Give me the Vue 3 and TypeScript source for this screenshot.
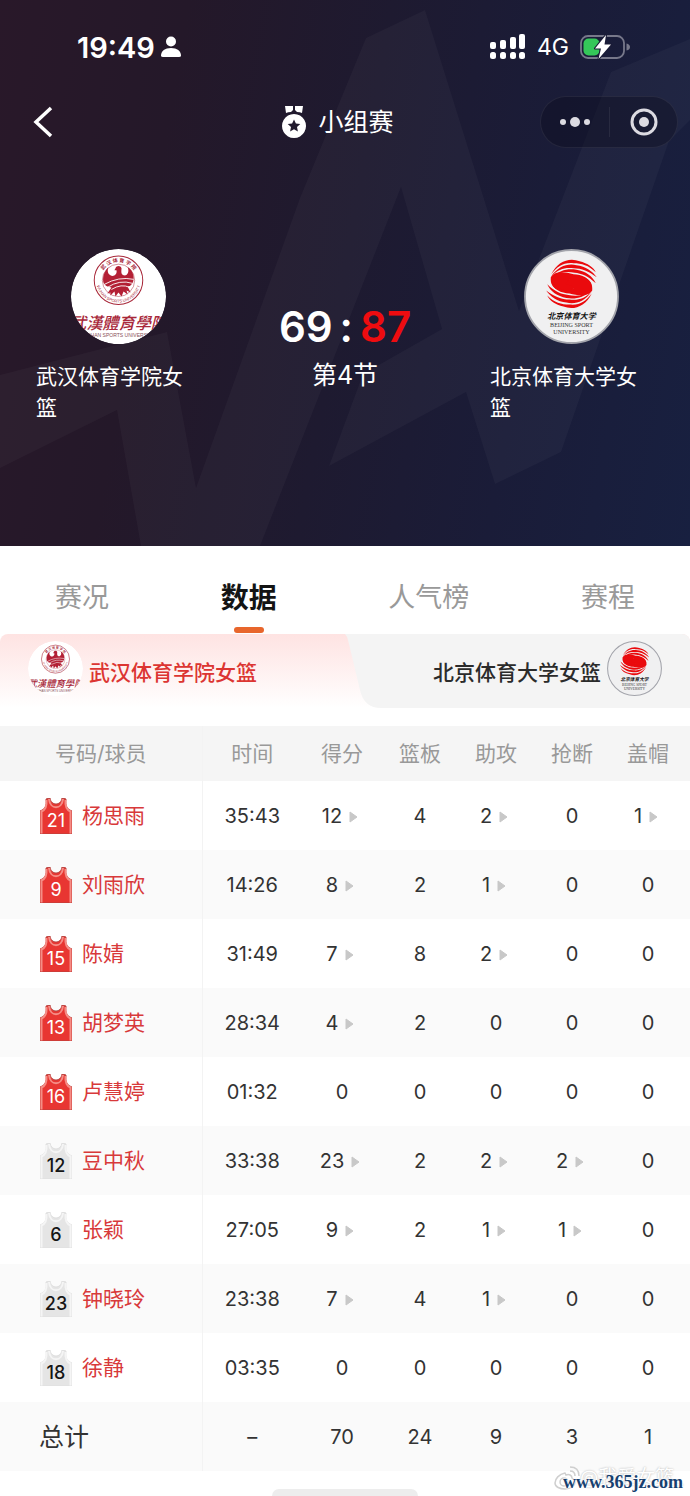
<script setup lang="ts">
import { ref } from 'vue'

interface Stat {
  value: string
  more?: boolean
}

interface Player {
  no: number
  name: string
  starter: boolean
  time: string
  stats: Stat[]
}

// A trailing ">" marks a figure that opens a detail list.
const parse = (line: string): Stat[] =>
  line.split(' ').map((s) => ({ value: s.replace('>', ''), more: s.endsWith('>') }))

const columns = ['时间', '得分', '篮板', '助攻', '抢断', '盖帽']
const tabs = ['赛况', '数据', '人气榜', '赛程']
const activeTab = ref(1)

const players: Player[] = [
  { no: 21, name: '杨思雨', starter: true, time: '35:43', stats: parse('12> 4 2> 0 1>') },
  { no: 9, name: '刘雨欣', starter: true, time: '14:26', stats: parse('8> 2 1> 0 0') },
  { no: 15, name: '陈婧', starter: true, time: '31:49', stats: parse('7> 8 2> 0 0') },
  { no: 13, name: '胡梦英', starter: true, time: '28:34', stats: parse('4> 2 0 0 0') },
  { no: 16, name: '卢慧婷', starter: true, time: '01:32', stats: parse('0 0 0 0 0') },
  { no: 12, name: '豆中秋', starter: false, time: '33:38', stats: parse('23> 2 2> 2> 0') },
  { no: 6, name: '张颖', starter: false, time: '27:05', stats: parse('9> 2 1> 1> 0') },
  { no: 23, name: '钟晓玲', starter: false, time: '23:38', stats: parse('7> 4 1> 0 0') },
  { no: 18, name: '徐静', starter: false, time: '03:35', stats: parse('0 0 0 0 0') },
]
const totals = ['–', '70', '24', '9', '3', '1']
</script>

<template>
  <div class="page">
    <svg class="defs" aria-hidden="true">
      <symbol id="wuhan" viewBox="0 0 94 94">
        <clipPath id="wuhan-clip"><circle cx="47" cy="47" r="47" /></clipPath>
        <g clip-path="url(#wuhan-clip)">
          <circle cx="47" cy="47" r="47" fill="#fff" />
          <circle cx="47" cy="31" r="24" fill="none" stroke="#a8283a" stroke-width="1" />
          <circle cx="47" cy="31" r="16" fill="none" stroke="#a8283a" stroke-width="0.5" />
          <path id="ring-top" d="M29 31a18 18 0 0 1 36 0" fill="none" />
          <path id="ring-bottom" d="M25 31a22 22 0 0 0 44 0" fill="none" />
          <text class="seal-cn" fill="#a8283a" text-anchor="middle"><textPath href="#ring-top" startOffset="50%">武 汉 体 育 学 院</textPath></text>
          <text class="seal-en" fill="#a8283a" text-anchor="middle"><textPath href="#ring-bottom" startOffset="50%">WUHAN SPORTS UNIVERSITY</textPath></text>
          <path
            d="M37 18C33 22 31 27 32 33C34 37 37 38 40 38L36 44L39 43L39 46L43 42L44 47L47 43L50 47L52 42L56 45L55 41L59 43L56 37C60 37 62 33 62 29C62 24 60 20 56 18C58 22 56 27 52 26C49 25 50 21 50 19C49 16 45 16 44 19L43 21L45 21C46 25 42 28 39 26C36 24 36 21 37 18Z"
            fill="#b32035" />
          <path d="M33 35Q47 27 62 30M36 38Q48 30 61 34M40 40Q50 34 58 38" fill="none" stroke="#fff" stroke-width="0.900" />
          <text class="brush" x="47" y="79" fill="#a8283a" text-anchor="middle">武漢體育學院</text>
          <text class="sub-en" x="47" y="87" fill="#8a5058" text-anchor="middle">WUHAN SPORTS UNIVERSITY</text>
        </g>
      </symbol>
      <symbol id="beijing" viewBox="0 0 94 94">
        <circle cx="47" cy="47" r="46" fill="#f0f0f1" stroke="#a3a4ab" stroke-width="1.800" />
        <g id="swirl-half" fill="#ea0a0d">
          <path d="M27 25C33 12 45 8 55 12C63 14 69 18 71 23C64 16 57 14 49 14C39 13 33 17 27 25Z" />
          <path d="M27 27C34 17 43 14 52 16C61 17 68 22 72 28C64 22 57 19 49 19C40 18 34 20 27 27Z" />
          <path d="M28 28C35 21 43 19 52 20.500C61 22 68 27 71 34C64 27 57 24 50 23.500C42 22 34 23 28 28Z" />
          <path d="M26.500 28C26 34 28 38 33 40C38 43 43 42 47 42L53 34.500C49 33 44 32 45 30C49 26 61 28 67 37C66 29 57 25 49 25C41 23 31 21 26.500 28Z" />
        </g>
        <use href="#swirl-half" transform="rotate(180 47 34.500)" />
        <text class="brush-small" x="47" y="69" fill="#161616" text-anchor="middle">北京体育大学</text>
        <text class="serif-en" x="47" y="77" fill="#333" text-anchor="middle">BEIJING SPORT</text>
        <text class="serif-en" x="47" y="84" fill="#333" text-anchor="middle">UNIVERSITY</text>
      </symbol>
      <symbol id="jersey" viewBox="0 0 32 36">
        <path class="jersey-body" d="M6 1L10 0C11 8 21 8 22 0L26 1C25 8 27 11 32 13V36H0V13C5 11 7 8 6 1Z" />
        <path class="jersey-trim" d="M6.500 2C7 8 5 12 1.500 13.500V35.500M25.500 2C25 8 27 12 30.500 13.500V35.500M9 1C10 12 22 12 23 1" />
      </symbol>
    </svg>

    <header class="hero">
      <svg class="hero-art" viewBox="0 0 690 546" preserveAspectRatio="none" aria-hidden="true">
        <path
          d="M0 375L167 332L196 488L300 198L366 38L425 10L519 311L611 72L690 39V120L669 141L561 452L495 484L466 392L329 466L363 374L442 329L401 187L260 546H141L117 410L0 468Z" />
      </svg>

      <div class="status">
        <div class="clock">
          19:49
          <svg width="20" height="22" viewBox="0 0 20 22" fill="#fff" aria-hidden="true">
            <circle cx="10" cy="5.500" r="5" />
            <path d="M0 19.500C0 15 4 12 10 12S20 15 20 19.500Q20 21 18 21H2Q0 21 0 19.500Z" />
          </svg>
        </div>
        <div class="signals">
          <svg width="36" height="26" viewBox="0 0 36 26" fill="#fff" aria-hidden="true">
            <rect x="0" y="8" width="6" height="7" rx="2" /><rect x="10" y="6" width="6" height="9" rx="2" />
            <rect x="20" y="3" width="6" height="12" rx="2" /><rect x="29" y="0" width="6" height="15" rx="2" />
            <rect x="0" y="18" width="6" height="7" rx="2.500" /><rect x="10" y="18" width="6" height="7" rx="2.500" />
            <rect x="20" y="18" width="6" height="7" rx="2.500" /><rect x="29" y="18" width="6" height="7" rx="2.500" />
          </svg>
          <span>4G</span>
          <svg width="50" height="26" viewBox="0 0 50 26" aria-hidden="true">
            <rect x="1" y="2" width="43" height="22" rx="7" fill="none" stroke="#77788a" stroke-width="1.800" />
            <path d="M46.500 9.500Q50 10.500 50 13T46.500 16.500Z" fill="#77788a" />
            <rect x="3.500" y="4.500" width="16" height="17" rx="5" fill="#35c759" />
            <path d="M26 1L15 14.500H21L18.500 25L31 10.500H24.500Z" fill="#fff" stroke="#1b1c37" stroke-width="2" stroke-linejoin="round" paint-order="stroke" />
          </svg>
        </div>
      </div>

      <nav class="nav">
        <button class="back" type="button" aria-label="返回">
          <svg width="20" height="32" viewBox="0 0 20 32" fill="none" stroke="#fff" stroke-width="3.500"><path d="M18 2L3 16L18 30" /></svg>
        </button>
        <h1>
          <svg width="24" height="32" viewBox="0 0 24 32" fill="#fff" aria-hidden="true">
            <path d="M3 0H11V4L9 6Q6 6 4 7Z M13 0H21L20 7Q18 6 15 6L13 4Z" />
            <path fill-rule="evenodd" d="M12 8a12 12 0 1 0 .01 0ZM12 13.500L13.900 17.600L18.300 18.100L15 21.100L15.900 25.500L12 23.300L8.100 25.500L9 21.100L5.700 18.100L10.100 17.600Z" />
          </svg>
          小组赛
        </h1>
        <div class="capsule">
          <button type="button" aria-label="更多">
            <svg width="30" height="12" viewBox="0 0 30 12" fill="#dcdbe2"><circle cx="3" cy="6" r="3" /><circle cx="15" cy="6" r="5" /><circle cx="27" cy="6" r="3" /></svg>
          </button>
          <button type="button" aria-label="关闭">
            <svg width="28" height="28" viewBox="0 0 28 28" fill="none"><circle cx="14" cy="14" r="12" stroke="#dcdbe2" stroke-width="3" /><circle cx="14" cy="14" r="5" fill="#dcdbe2" /></svg>
          </button>
        </div>
      </nav>

      <section class="match">
        <div class="team">
          <svg class="logo" role="img" aria-label="武汉体育学院"><use href="#wuhan" /></svg>
          <p>武汉体育学院女篮</p>
        </div>
        <div class="result">
          <div class="score"><span>69</span><span>:</span><span class="away">87</span></div>
          <div class="period">第4节</div>
        </div>
        <div class="team">
          <svg class="logo" role="img" aria-label="北京体育大学"><use href="#beijing" /></svg>
          <p>北京体育大学女篮</p>
        </div>
      </section>
    </header>

    <nav class="tabs">
      <button
        v-for="(tab, i) in tabs" :key="tab" type="button"
        :class="{ active: i === activeTab }" @click="activeTab = i">{{ tab }}</button>
    </nav>

    <div class="switcher">
      <button class="side home" type="button">
        <svg class="mini" aria-hidden="true"><use href="#wuhan" /></svg>武汉体育学院女篮
      </button>
      <button class="side guest" type="button">
        <svg width="36" height="74" viewBox="0 0 36 74" aria-hidden="true"><path d="M0 0Q2 2 3 6L15 56Q19 74 36 74V0Z" fill="#f4f4f4" /></svg>
        <span class="guest-label">北京体育大学女篮<svg class="mini" aria-hidden="true"><use href="#beijing" /></svg></span>
      </button>
    </div>

    <table>
      <colgroup>
        <col class="c-player" /><col class="c-time" /><col class="c-points" />
        <col class="c-stat" /><col class="c-stat" /><col class="c-stat" /><col class="c-last" />
      </colgroup>
      <thead>
        <tr><th scope="col">号码/球员</th><th v-for="c in columns" :key="c" scope="col">{{ c }}</th></tr>
      </thead>
      <tbody>
        <tr v-for="p in players" :key="p.no">
          <th scope="row">
            <div class="player">
              <span class="shirt" :class="{ starter: p.starter }">
                <svg width="32" height="36" aria-hidden="true"><use href="#jersey" /></svg>
                <b>{{ p.no }}</b>
              </span>
              <span class="name">{{ p.name }}</span>
            </div>
          </th>
          <td>{{ p.time }}</td>
          <td v-for="(s, i) in p.stats" :key="i">
            <button v-if="s.more" class="more" type="button">
              {{ s.value }}
              <svg width="9" height="12" viewBox="0 0 9 12" aria-hidden="true"><path d="M1 1L8 6L1 11Z" fill="#c8c8c8" stroke="#c8c8c8" stroke-linejoin="round" /></svg>
            </button>
            <template v-else>{{ s.value }}</template>
          </td>
        </tr>
      </tbody>
      <tfoot>
        <tr><th scope="row">总计</th><td v-for="(t, i) in totals" :key="i">{{ t }}</td></tr>
      </tfoot>
    </table>

    <footer>
      <div class="home-bar"></div>
      <div class="watermark">
        <span class="author">
          <svg width="26" height="24" viewBox="0 0 26 24" fill="#fff" stroke="#cfcfcf" stroke-width="1.500" aria-hidden="true">
            <path d="M11 7C5 8 1 13 1 17C1 21 6 23 11 23C17 23 21 20 21 16C21 14 19 13 18 12C18 9 15 8 12 9Z" />
            <circle cx="10" cy="16" r="4" /><path d="M16 5Q21 5 21 10M16 1Q25 1 25 10" fill="none" />
          </svg>@我爱女篮_
        </span>
        <a href="#">www.365jz.com</a>
      </div>
    </footer>
  </div>
</template>

<style>
body {
  margin: 0;
  background: #fff;
}
</style>

<style scoped>
.page {
  font-family: Inter, "Noto Sans CJK SC", sans-serif;
  color: #333;
  background: #fff;
  overflow: hidden;
}

button {
  font: inherit;
  color: inherit;
  background: none;
  border: 0;
  padding: 0;
  cursor: pointer;
}

svg {
  display: block;
  flex: none;
}

.defs {
  position: absolute;
  width: 0;
  height: 0;
}

.seal-cn { font: bold 5px "Noto Sans CJK SC", sans-serif; }
.seal-en { font: 4px "Liberation Sans", sans-serif; }
.brush { font: italic 500 16px "Noto Sans CJK TC", sans-serif; }
.brush-small { font: italic bold 8px "Noto Sans CJK SC", sans-serif; }
.sub-en { font: 5px "Liberation Sans", sans-serif; }
.serif-en { font: 6px "Liberation Serif", serif; }

.hero {
  position: relative;
  padding-bottom: 123px;
  color: #fff;
  background: linear-gradient(100deg, #291829 0%, #241829 24%, #1e1a30 50%, #1a1c38 74%, #182040 100%);
}

.hero-art {
  position: absolute;
  inset: 0;
  width: 100%;
  height: 100%;
  fill: #fff;
  fill-opacity: 0.03;
}

.status,
.nav,
.match {
  position: relative;
  display: flex;
}

.status {
  height: 42px;
  padding: 26px 60px 28px 77px;
  align-items: center;
  justify-content: space-between;
}

.clock {
  display: flex;
  align-items: center;
  gap: 6px;
  font-size: 29px;
  font-weight: 600;
}

.signals {
  display: flex;
  align-items: center;
  gap: 11px;
  font-size: 23px;
}

.nav {
  display: grid;
  grid-template-columns: 1fr auto 1fr;
  align-items: center;
  padding: 0 12px;
}

.back {
  justify-self: start;
  margin-left: 21px;
}

h1 {
  display: flex;
  align-items: center;
  gap: 12px;
  margin: 0;
  padding-right: 14px;
  font-size: 25px;
  font-weight: 400;
  line-height: 36px;
}

.capsule {
  display: grid;
  grid-template-columns: 1fr 1fr;
  justify-self: end;
  width: 136px;
  height: 50px;
  border: 1px solid #ffffff12;
  border-radius: 26px;
  background: #0d0d1e66;
}

.capsule button {
  display: grid;
  place-items: center;
  margin: 10px 0;
}

.capsule button + button {
  border-left: 1px solid #ffffff12;
}

.match {
  justify-content: space-between;
  margin-top: 101px;
  padding: 0 36px;
}

.team {
  width: 164px;
}

.logo {
  width: 95px;
  height: 95px;
  margin: 0 auto;
}

.team p {
  margin: 17px 0 0;
  font-size: 21px;
  line-height: 31px;
}

.result {
  padding-top: 52px;
  text-align: center;
}

.score {
  display: flex;
  gap: 7px;
  font-size: 42px;
  line-height: 52px;
  font-weight: 600;
}

.away {
  color: #ee0c10;
}

.period {
  margin-top: 4px;
  font-size: 25px;
  line-height: 36px;
}

.tabs {
  display: flex;
  justify-content: space-between;
  height: 88px;
  padding: 0 55px;
}

.tabs button {
  position: relative;
  padding-top: 16px;
  line-height: 40px;
  font-size: 27px;
  color: #999;
}

.tabs .active {
  font-size: 28px;
  font-weight: 700;
  color: #141414;
}

.tabs .active::after {
  content: "";
  position: absolute;
  left: 50%;
  bottom: 1px;
  width: 30px;
  height: 6px;
  margin-left: -15px;
  border-radius: 3px;
  background: #e8662c;
}

.switcher {
  display: grid;
  grid-template-columns: 1fr 1fr;
  height: 74px;
  margin-bottom: 18px;
  border-radius: 8px 8px 0 0;
  overflow: hidden;
  background: linear-gradient(#fee3e2, #fff);
  font-size: 21px;
  font-weight: 500;
}

.side {
  display: flex;
  align-items: center;
}

.home {
  gap: 6px;
  padding-left: 28px;
  color: #dc3532;
}

.guest-label {
  display: flex;
  flex: 1;
  align-items: center;
  justify-content: flex-end;
  gap: 6px;
  height: 100%;
  padding-right: 28px;
  color: #2b2b2b;
  background: #f4f4f4;
}

.mini {
  width: 55px;
  height: 55px;
  margin-bottom: 6px;
}

table {
  width: 100%;
  table-layout: fixed;
  border-collapse: collapse;
  text-align: center;
}

.c-player { width: 202px; }
.c-time { width: 100px; }
.c-points { width: 80px; }
.c-stat { width: 76px; }
.c-last { width: 80px; }

th,
td {
  height: 69px;
  padding: 0;
  font-size: 20px;
  font-weight: 400;
}

td:last-child,
th:last-child {
  padding-right: 4px;
}

tr > th:first-child {
  border-right: 1px solid #f3f3f3;
}

thead th {
  height: 51px;
  padding-bottom: 4px;
  font-size: 21px;
  color: #999;
  background: #f5f5f5;
}

tbody tr:nth-child(even),
tfoot tr {
  background: #fafafa;
}

.player {
  display: flex;
  align-items: center;
  gap: 10px;
  padding-left: 40px;
  font-size: 21px;
  color: #d8393a;
}

.name {
  padding-bottom: 4px;
}

.shirt {
  display: grid;
  justify-items: center;
  align-items: end;
  color: #151515;
  --body: #e5e5e5;
  --trim: #f5f5f5;
  --edge: #dedede;
}

.shirt.starter {
  color: #fff;
  --body: #e83632;
  --trim: #f58d86;
  --edge: #b5433f;
}

.shirt svg,
.shirt b {
  grid-area: 1 / 1;
}

.shirt b {
  position: relative;
  font-size: 18px;
  font-weight: 500;
  line-height: 26px;
}

.shirt.starter b {
  font-weight: 400;
}

.jersey-body {
  fill: var(--body);
  stroke: var(--edge);
  stroke-width: 1;
}

.jersey-trim {
  fill: none;
  stroke: var(--trim);
  stroke-width: 2;
}

.more {
  display: inline-flex;
  align-items: center;
  gap: 7px;
  padding-right: 4px;
}

.more svg {
  margin-top: 3px;
}

tfoot tr > th:first-child {
  height: 65px;
  padding: 0 0 4px 39px;
  font-size: 25px;
  text-align: left;
}

footer {
  position: relative;
  display: flex;
  justify-content: center;
  height: 25px;
}

.home-bar {
  width: 146px;
  height: 7px;
  margin-top: 18px;
  border-radius: 7px 7px 0 0;
  background: #ededed;
}

.watermark {
  position: absolute;
  right: 7px;
  bottom: 2px;
  display: grid;
  justify-items: end;
}

.watermark > * {
  grid-area: 1 / 1;
}

.author {
  display: flex;
  align-items: center;
  font-size: 19px;
  line-height: 24px;
  color: #fff;
  padding-bottom: 4px;
  text-shadow: 0 0 2px #aaa;
}

.watermark a {
  align-self: end;
  font: bold 18px/24px "Liberation Serif", serif;
  color: #17406f;
  text-decoration: none;
  text-shadow: 0 0 2px #fff, 0 0 2px #fff;
}
</style>
